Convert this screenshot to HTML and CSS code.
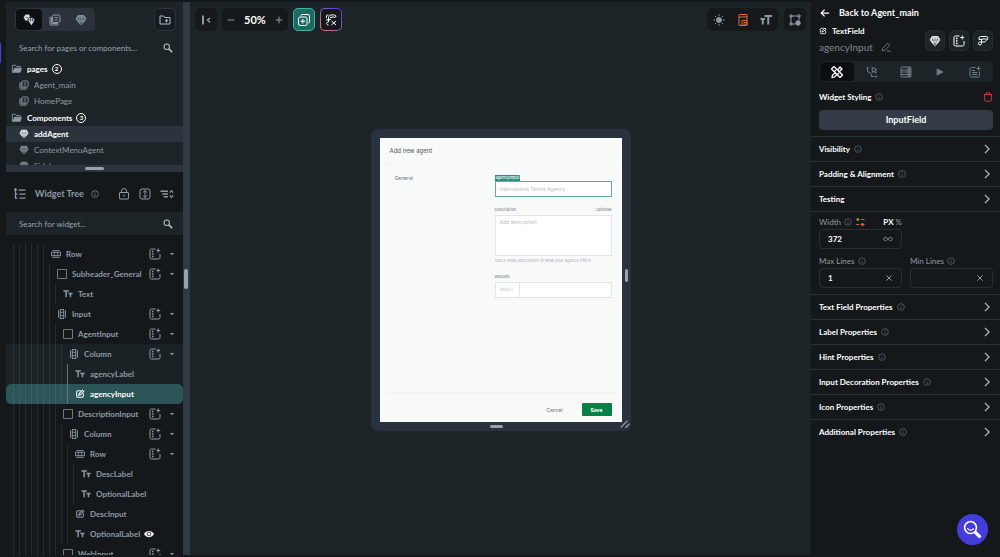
FILE: index.html
```html
<!DOCTYPE html>
<html lang="en">
<head>
    <meta charset="UTF-8">
    <meta name="viewport" content="width=device-width, initial-scale=1.0">
    <title>addAgent</title>
    <link rel="stylesheet" href="styles.css">
</head>
<body>
    <!-- Icon set -->
    <svg class="sprite" aria-hidden="true">
        <symbol id="i-gem" viewBox="0 0 24 24"><path d="M6 2h12l5 8-11 13L1 10z" fill="currentColor" stroke="none"/><path d="M2 10h20M8 3l-1 7 5 11 5-11-1-7M12 3v18" stroke="var(--cut)" stroke-width="1"/></symbol>
        <symbol id="i-pages" viewBox="0 0 24 24"><rect x="7" y="2" width="15" height="15" rx="3"/><path d="M4 6H3a1 1 0 0 0-1 1v13a2 2 0 0 0 2 2h13a2 2 0 0 0 2-2M11 7h7M11 12h7M7 7H5v12h12v-2"/></symbol>
        <symbol id="i-mix" viewBox="0 0 24 24"><path d="M5 1h7l2 4-3 9-6-1-4-6z" fill="currentColor" stroke="none"/><path d="M5 7h6" stroke="var(--cut)" stroke-width="1"/><path d="M9 12l4-5h7l4 5-7 12z" fill="currentColor" stroke="var(--cut)" stroke-width="1.5"/><path d="M10 12h12M15 8v7M19 8v7" stroke="var(--cut)" stroke-width="1"/></symbol>
        <symbol id="i-folder-add" viewBox="0 0 24 24"><path d="M2 4h7l2 3h11v13H2zM15 10v7M12 13.500h6"/></symbol>
        <symbol id="i-folder" viewBox="0 0 24 24"><path d="M1 21V3h8l2 3h9v4H6L2 21" stroke-width="2"/><path d="M6 10h18l-4 11H2z" fill="currentColor" stroke="none"/></symbol>
        <symbol id="i-search" viewBox="0 0 24 24"><circle cx="9" cy="9" r="6.500" stroke-width="2.500"/><path d="M14 14l8 8" stroke-width="4"/></symbol>
        <symbol id="i-info" viewBox="0 0 24 24"><circle cx="12" cy="12" r="10"/><path d="M12 11v7M12 6v2"/></symbol>
        <symbol id="i-tree" viewBox="0 0 24 24"><path d="M9 4h14M11 12h12M11 20h12M3 2v18h4M3 12h4" stroke-width="2.500"/><circle cx="3" cy="3" r="2" fill="currentColor"/></symbol>
        <symbol id="i-lock" viewBox="0 0 24 24"><rect x="3" y="9" width="18" height="13" rx="1"/><path d="M7 9V6a5 5 0 0 1 10 0v3M12 13v4"/></symbol>
        <symbol id="i-expand" viewBox="0 0 24 24"><rect x="2" y="2" width="20" height="20" rx="4"/><path d="M12 5v14M8 9l4-4 4 4M8 15l4 4 4-4"/></symbol>
        <symbol id="i-sort" viewBox="0 0 30 24"><path d="M1 6h16M5 12h12M8 18h9" stroke-width="3"/><path d="M21 9l3.500-4L28 9M21 15l3.500 4 3.500-4" stroke-width="2.500"/></symbol>
        <symbol id="i-row" viewBox="0 0 24 24"><path d="M3 4h18M3 20h18" stroke-width="2.500"/><rect x="1" y="8" width="22" height="8"/><path d="M8 8v8M16 8v8"/></symbol>
        <symbol id="i-column" viewBox="0 0 24 24"><path d="M4 3v18M20 3v18" stroke-width="2.500"/><rect x="8" y="1" width="8" height="22"/><path d="M8 8h8M8 16h8"/></symbol>
        <symbol id="i-box" viewBox="0 0 24 24"><rect x="1" y="1" width="22" height="22" rx="1"/></symbol>
        <symbol id="i-type" viewBox="0 0 24 24"><path d="M1 5h13M7.500 5v15M13 11h10M18 11v9" stroke-width="3.500"/></symbol>
        <symbol id="i-field" viewBox="0 0 24 24"><path d="M14 4H7a3 3 0 0 0-3 3v10a3 3 0 0 0 3 3h10a3 3 0 0 0 3-3v-6M9 15l1-4 8-8 3 3-8 8z" stroke-width="2.500"/></symbol>
        <symbol id="i-insert" viewBox="0 0 24 24"><path d="M13 2H5a3 3 0 0 0-3 3v14a3 3 0 0 0 3 3h14a3 3 0 0 0 3-3v-7M18.500 1v8M14.500 5h8"/><path d="M6 7h3M6 12h3M6 17h3" stroke-width="3"/></symbol>
        <symbol id="i-caret" viewBox="0 0 24 24"><path d="M4 8h16l-8 9z" fill="currentColor" stroke="none"/></symbol>
        <symbol id="i-eye" viewBox="0 0 24 24"><path d="M0 12C5 2 19 2 24 12 19 22 5 22 0 12z" fill="currentColor" stroke="none"/><circle cx="12" cy="12" r="4.500" stroke="var(--cut)"/></symbol>
        <symbol id="i-collapse" viewBox="0 0 24 24"><path d="M6 3v18" stroke-width="4"/><path d="M20 8l-5 4 5 5" stroke-width="3"/></symbol>
        <symbol id="i-minus" viewBox="0 0 24 24"><path d="M2 12h20" stroke-width="3"/></symbol>
        <symbol id="i-plus" viewBox="0 0 24 24"><path d="M2 12h20M12 2v20" stroke-width="3"/></symbol>
        <symbol id="i-copy-add" viewBox="0 0 24 24"><rect x="1" y="6" width="17" height="17" rx="3"/><path d="M6 3a2 2 0 0 1 2-2h12a3 3 0 0 1 3 3v12a2 2 0 0 1-2 2M9.500 10v9M5 14.500h9"/></symbol>
        <symbol id="i-flow" viewBox="0 0 24 24"><path d="M7 22c-5 0-5-6 0-6V7c0-7 14-6 15-3 0 3-3 3-5 2l-7 1M2 12l10-1M13 14l9 8M22 14l-9 8M3 8V4c0-2 2-2 4-2"/></symbol>
        <symbol id="i-flow-edit" viewBox="0 0 24 24"><path d="M4 9V6c0-2 1-3 3-3h12c4 0 4 5 0 5H9v9a3 3 0 1 1-4-3h9c5 0 4-5 8-6M4 9h4"/></symbol>
        <symbol id="i-sun" viewBox="0 0 24 24"><circle cx="12" cy="12" r="5" fill="currentColor"/><path d="M12 1v3M12 20v3M1 12h3M20 12h3M4 4l2 2M18 18l2 2M4 20l2-2M18 6l2-2"/></symbol>
        <symbol id="i-device" viewBox="0 0 20 24"><rect x="2" y="1" width="16" height="22" rx="1"/><path d="M2 6h16M8 22v-9h10M12 22v-5h6v5z"/></symbol>
        <symbol id="i-text-size" viewBox="0 0 24 24"><path d="M9 4h15M16.500 4v17M1 10h9M5.500 10v11" stroke-width="4"/></symbol>
        <symbol id="i-nodes" viewBox="0 0 24 24"><path d="M4 4h16M4 4v16M20 4v9M4 20h9"/><circle cx="4" cy="4" r="2.500"/><circle cx="20" cy="4" r="2.500"/><circle cx="4" cy="20" r="2.500"/><circle cx="18" cy="18" r="4.500" fill="currentColor"/></symbol>
        <symbol id="i-back" viewBox="0 0 24 24"><path d="M22 12H3M11 4l-8 8 8 8" stroke-width="3"/></symbol>
        <symbol id="i-edit" viewBox="0 0 24 24"><path d="M3 21l1-6L16 3l5 5L9 20zM14 22h9"/></symbol>
        <symbol id="i-tools" viewBox="0 0 24 24"><path d="M1 6l5-5 17 17-5 5zM7 11l3-3M13 17l3-3M14 7l4-5 4 4-5 5M9 13l-6 5-1 5 5-1 5-5" stroke-width="2.500"/></symbol>
        <symbol id="i-actions" viewBox="0 0 24 24"><path d="M3 5v5c0 4 8 2 8 7v4h5M12 3l10 4-4 2 3 4-3 1-2-4-3 3z"/><circle cx="3" cy="4" r="1.500"/><circle cx="20" cy="21" r="1.500"/></symbol>
        <symbol id="i-data" viewBox="0 0 24 24"><rect x="2" y="2" width="20" height="20" rx="1"/><path d="M2 8h20M2 12h20M2 17h20M16 2v20M19 2v20"/></symbol>
        <symbol id="i-play" viewBox="0 0 24 24"><path d="M4 3l17 9-17 9z" fill="currentColor" stroke="none"/></symbol>
        <symbol id="i-note" viewBox="0 0 24 24"><path d="M13 3H5a3 3 0 0 0-3 3v13a3 3 0 0 0 3 3h13a3 3 0 0 0 3-3v-8M6 9h6M6 13h11M6 17h11M19 1v8M15 5h8"/></symbol>
        <symbol id="i-trash" viewBox="0 0 24 24"><path d="M2 6h20M8 6V2h8v4M4 6v14a2 2 0 0 0 2 2h12a2 2 0 0 0 2-2V6"/></symbol>
        <symbol id="i-chevron" viewBox="0 0 24 24"><path d="M7 2l10 10L7 22" stroke-width="3"/></symbol>
        <symbol id="i-variable" viewBox="0 0 24 24"><path d="M2 6h7M14 6h9M2 18h9M15 18h8" stroke-width="2"/><circle cx="7" cy="6" r="2.500" fill="currentColor"/><circle cx="18" cy="18" r="2.500" fill="currentColor"/></symbol>
        <symbol id="i-infinity" viewBox="0 0 24 24"><path d="M12 12c-3-5-10-6-10 0s7 5 10 0c3-5 10-6 10 0s-7 5-10 0z"/></symbol>
        <symbol id="i-close" viewBox="0 0 24 24"><path d="M4 4l16 16M20 4L4 20" stroke-width="3"/></symbol>
        <symbol id="i-help" viewBox="0 0 24 24"><circle cx="9.500" cy="9.500" r="7.500"/><path d="M5.500 10.500c2 3 6 3 8 0" stroke-width="1.500"/><path d="M15 15l7 7" stroke-width="4"/></symbol>
        <symbol id="i-grip" viewBox="0 0 24 24"><path d="M2 20L18 4M13 21L23 11" stroke-width="3"/></symbol>
    </svg>

    <div class="app">
        <div class="rail"><span class="rail-mark"></span></div>

        <!-- Left panel -->
        <aside class="sidebar">
            <div class="side-head">
                <div class="toggle-group">
                    <button class="active" aria-label="All"><svg class="icon"><use href="#i-mix"/></svg></button>
                    <button aria-label="Pages"><svg class="icon"><use href="#i-pages"/></svg></button>
                    <button aria-label="Components"><svg class="icon"><use href="#i-gem"/></svg></button>
                </div>
                <button class="square-btn" aria-label="New folder"><svg class="icon"><use href="#i-folder-add"/></svg></button>
            </div>
            <div class="search">
                <input type="text" aria-label="Search pages" placeholder="Search for pages or components...">
                <svg class="icon"><use href="#i-search"/></svg>
            </div>
            <ul class="pages">
                <li class="group"><svg class="icon"><use href="#i-folder"/></svg>pages<span class="count">2</span></li>
                <li><svg class="icon"><use href="#i-pages"/></svg>Agent_main</li>
                <li><svg class="icon"><use href="#i-pages"/></svg>HomePage</li>
                <li class="group"><svg class="icon"><use href="#i-folder"/></svg>Components<span class="count">3</span></li>
                <li class="active"><svg class="icon"><use href="#i-gem"/></svg>addAgent</li>
                <li><svg class="icon"><use href="#i-gem"/></svg>ContextMenuAgent</li>
                <li><svg class="icon"><use href="#i-gem"/></svg>Sidebar</li>
            </ul>
            <div class="split-h"><span></span></div>
            <div class="tree-head">
                <svg class="icon icon-lg"><use href="#i-tree"/></svg>
                <h2>Widget Tree</h2>
                <svg class="icon icon-sm"><use href="#i-info"/></svg>
                <div class="tree-tools">
                    <button aria-label="Lock"><svg class="icon icon-lg"><use href="#i-lock"/></svg></button>
                    <button aria-label="Expand"><svg class="icon icon-lg"><use href="#i-expand"/></svg></button>
                    <button aria-label="Sort"><svg class="icon icon-wide"><use href="#i-sort"/></svg></button>
                </div>
            </div>
            <div class="search search-tree">
                <input type="text" aria-label="Search widgets" placeholder="Search for widget...">
                <svg class="icon"><use href="#i-search"/></svg>
            </div>
            <ul class="tree">
                <li class="d6"><i></i><svg class="icon"><use href="#i-row"/></svg><span>Row</span><button class="insert" aria-label="Insert"><svg class="icon"><use href="#i-insert"/></svg></button><button aria-label="Toggle"><svg class="caret"><use href="#i-caret"/></svg></button></li>
                <li class="d7"><i></i><svg class="icon"><use href="#i-box"/></svg><span>Subheader_General</span><button class="insert" aria-label="Insert"><svg class="icon"><use href="#i-insert"/></svg></button><button aria-label="Toggle"><svg class="caret"><use href="#i-caret"/></svg></button></li>
                <li class="d8"><i></i><svg class="icon"><use href="#i-type"/></svg><span>Text</span></li>
                <li class="d7"><i></i><svg class="icon"><use href="#i-column"/></svg><span>Input</span><button class="insert" aria-label="Insert"><svg class="icon"><use href="#i-insert"/></svg></button><button aria-label="Toggle"><svg class="caret"><use href="#i-caret"/></svg></button></li>
                <li class="d8"><i></i><svg class="icon"><use href="#i-box"/></svg><span>AgentInput</span><button class="insert" aria-label="Insert"><svg class="icon"><use href="#i-insert"/></svg></button><button aria-label="Toggle"><svg class="caret"><use href="#i-caret"/></svg></button></li>
                <li class="d9 parent"><i></i><svg class="icon"><use href="#i-column"/></svg><span>Column</span><button class="insert" aria-label="Insert"><svg class="icon"><use href="#i-insert"/></svg></button><button aria-label="Toggle"><svg class="caret"><use href="#i-caret"/></svg></button></li>
                <li class="d10 parent near"><i></i><svg class="icon"><use href="#i-type"/></svg><span>agencyLabel</span></li>
                <li class="d10 selected near"><i></i><svg class="icon"><use href="#i-field"/></svg><span>agencyInput</span></li>
                <li class="d8"><i></i><svg class="icon"><use href="#i-box"/></svg><span>DescriptionInput</span><button class="insert" aria-label="Insert"><svg class="icon"><use href="#i-insert"/></svg></button><button aria-label="Toggle"><svg class="caret"><use href="#i-caret"/></svg></button></li>
                <li class="d9"><i></i><svg class="icon"><use href="#i-column"/></svg><span>Column</span><button class="insert" aria-label="Insert"><svg class="icon"><use href="#i-insert"/></svg></button><button aria-label="Toggle"><svg class="caret"><use href="#i-caret"/></svg></button></li>
                <li class="d10"><i></i><svg class="icon"><use href="#i-row"/></svg><span>Row</span><button class="insert" aria-label="Insert"><svg class="icon"><use href="#i-insert"/></svg></button><button aria-label="Toggle"><svg class="caret"><use href="#i-caret"/></svg></button></li>
                <li class="d11"><i></i><svg class="icon"><use href="#i-type"/></svg><span>DescLabel</span></li>
                <li class="d11"><i></i><svg class="icon"><use href="#i-type"/></svg><span>OptionalLabel</span></li>
                <li class="d10"><i></i><svg class="icon"><use href="#i-field"/></svg><span>DescInput</span></li>
                <li class="d10"><i></i><svg class="icon"><use href="#i-type"/></svg><span>OptionalLabel</span><svg class="icon eye"><use href="#i-eye"/></svg></li>
                <li class="d8"><i></i><svg class="icon"><use href="#i-box"/></svg><span>WebInput</span><button class="insert" aria-label="Insert"><svg class="icon"><use href="#i-insert"/></svg></button><button aria-label="Toggle"><svg class="caret"><use href="#i-caret"/></svg></button></li>
            </ul>
        </aside>
        <div class="split-v"><span></span></div>

        <!-- Canvas -->
        <main class="canvas">
            <div class="toolbar">
                <button class="tool" aria-label="Collapse"><svg class="icon"><use href="#i-collapse"/></svg></button>
                <div class="tool-group zoom">
                    <button aria-label="Zoom out"><svg class="icon"><use href="#i-minus"/></svg></button>
                    <span>50%</span>
                    <button aria-label="Zoom in"><svg class="icon"><use href="#i-plus"/></svg></button>
                </div>
                <button class="tool tool-add" aria-label="Add"><svg class="icon"><use href="#i-copy-add"/></svg></button>
                <button class="tool tool-flow" aria-label="Generate"><svg class="icon"><use href="#i-flow"/></svg></button>
                <div class="tool-group view">
                    <button aria-label="Theme"><svg class="icon"><use href="#i-sun"/></svg></button>
                    <button class="orange" aria-label="Device"><svg class="icon"><use href="#i-device"/></svg></button>
                    <button aria-label="Text size"><svg class="icon"><use href="#i-text-size"/></svg></button>
                </div>
                <button class="tool" aria-label="Layout"><svg class="icon"><use href="#i-nodes"/></svg></button>
            </div>

            <div class="device">
                <div class="screen">
                    <h1>Add new agent</h1>
                    <div class="screen-body">
                        <h2>General</h2>
                        <div class="fields">
                            <span class="tag">agencyInput</span>
                            <input class="box picked" type="text" aria-label="Agency" placeholder="International Tennis Agency">
                            <div class="label-row"><label for="desc">Description</label><span>Optional</span></div>
                            <textarea class="box" id="desc" placeholder="Add description"></textarea>
                            <p>Add a small description of what your agency offers</p>
                            <div class="label-row"><label for="site">Website</label></div>
                            <div class="site"><span>https://</span><input id="site" type="text"></div>
                        </div>
                    </div>
                    <div class="screen-foot">
                        <button class="cancel">Cancel</button>
                        <button class="save">Save</button>
                    </div>
                </div>
                <span class="pull pull-right"></span>
                <span class="pull pull-bottom"></span>
                <svg class="grip"><use href="#i-grip"/></svg>
            </div>
        </main>

        <!-- Properties -->
        <aside class="props">
            <a class="back" href="#"><svg class="icon"><use href="#i-back"/></svg>Back to Agent_main</a>
            <div class="widget">
                <div class="widget-name">
                    <h2><svg class="icon icon-sm"><use href="#i-field"/></svg>TextField</h2>
                    <div class="alias">agencyInput<svg class="icon"><use href="#i-edit"/></svg></div>
                </div>
                <button aria-label="Component"><svg class="icon"><use href="#i-gem"/></svg></button>
                <button aria-label="Insert"><svg class="icon"><use href="#i-insert"/></svg></button>
                <button aria-label="Flow"><svg class="icon"><use href="#i-flow-edit"/></svg></button>
            </div>
            <div class="tabs">
                <button class="active" aria-label="Properties"><svg class="icon icon-lg"><use href="#i-tools"/></svg></button>
                <button aria-label="Actions"><svg class="icon icon-lg"><use href="#i-actions"/></svg></button>
                <button aria-label="Data"><svg class="icon icon-lg"><use href="#i-data"/></svg></button>
                <button aria-label="Animations"><svg class="icon"><use href="#i-play"/></svg></button>
                <button aria-label="Docs"><svg class="icon icon-lg"><use href="#i-note"/></svg></button>
            </div>
            <div class="styling">
                <h3>Widget Styling</h3><svg class="icon icon-sm info"><use href="#i-info"/></svg>
                <button aria-label="Remove"><svg class="icon"><use href="#i-trash"/></svg></button>
            </div>
            <button class="style-btn">InputField</button>

            <button class="section">Visibility<svg class="icon icon-sm info"><use href="#i-info"/></svg><svg class="icon go"><use href="#i-chevron"/></svg></button>
            <button class="section">Padding &amp; Alignment<svg class="icon icon-sm info"><use href="#i-info"/></svg><svg class="icon go"><use href="#i-chevron"/></svg></button>
            <button class="section">Testing<svg class="icon go"><use href="#i-chevron"/></svg></button>
            <div class="form">
                <div class="field">
                    <div class="field-label"><label for="width">Width</label><svg class="icon icon-sm info"><use href="#i-info"/></svg><svg class="icon orange"><use href="#i-variable"/></svg><span class="unit"><b>PX</b> %</span></div>
                    <div class="value"><input id="width" type="text" value="372"><svg class="icon"><use href="#i-infinity"/></svg></div>
                </div>
                <div class="field first">
                    <div class="field-label"><label for="max">Max Lines</label><svg class="icon icon-sm info"><use href="#i-info"/></svg></div>
                    <div class="value"><input id="max" type="text" value="1"><svg class="icon icon-sm"><use href="#i-close"/></svg></div>
                </div>
                <div class="field">
                    <div class="field-label"><label for="min">Min Lines</label><svg class="icon icon-sm info"><use href="#i-info"/></svg></div>
                    <div class="value"><input id="min" type="text"><svg class="icon icon-sm"><use href="#i-close"/></svg></div>
                </div>
            </div>
            <button class="section">Text Field Properties<svg class="icon icon-sm info"><use href="#i-info"/></svg><svg class="icon go"><use href="#i-chevron"/></svg></button>
            <button class="section">Label Properties<svg class="icon icon-sm info"><use href="#i-info"/></svg><svg class="icon go"><use href="#i-chevron"/></svg></button>
            <button class="section">Hint Properties<svg class="icon icon-sm info"><use href="#i-info"/></svg><svg class="icon go"><use href="#i-chevron"/></svg></button>
            <button class="section">Input Decoration Properties<svg class="icon icon-sm info"><use href="#i-info"/></svg><svg class="icon go"><use href="#i-chevron"/></svg></button>
            <button class="section">Icon Properties<svg class="icon icon-sm info"><use href="#i-info"/></svg><svg class="icon go"><use href="#i-chevron"/></svg></button>
            <button class="section">Additional Properties<svg class="icon icon-sm info"><use href="#i-info"/></svg><svg class="icon go"><use href="#i-chevron"/></svg></button>
        </aside>
    </div>
    <button class="help" aria-label="Help"><svg class="icon"><use href="#i-help"/></svg></button>
</body>
</html>
```
FILE: styles.css
```css
:root {
    --dark: #14181b;
    --panel: #1d2428;
    --line: #2b333c;
    --bar: #313945;
    --muted: #8e99a5;
    --cut: #1d2428;
}
* {
    box-sizing: border-box;
}
body {
    margin: 0;
    font-family: Lato, "Liberation Sans", sans-serif;
    font-size: 8px;
    line-height: 10px;
    background-color: var(--dark);
    color: var(--muted);
}
button {
    display: flex;
    align-items: center;
    justify-content: center;
    padding: 0;
    border: none;
    background: none;
    color: inherit;
    font: inherit;
    cursor: pointer;
}
input, textarea {
    min-width: 0;
    padding: 0;
    border: none;
    outline: none;
    background: none;
    color: inherit;
    font: inherit;
}
h1, h2, h3, p, ul {
    margin: 0;
    padding: 0;
    font-size: inherit;
}
ul {
    list-style: none;
}
.sprite {
    display: none;
}
.icon {
    flex: none;
    width: 10px;
    height: 10px;
    fill: none;
    stroke: currentColor;
    stroke-width: 2;
}
.icon-sm {
    width: 8px;
    height: 8px;
}
.icon-lg {
    width: 12px;
    height: 12px;
}
.icon-wide {
    width: 14px;
    height: 12px;
}
.orange {
    color: #e0703c;
}
.app {
    display: flex;
    height: 100vh;
    padding: 2px 0;
}
.rail {
    width: 6px;
    padding-top: 41px;
}
.rail-mark {
    display: block;
    width: 1px;
    height: 20px;
    background-color: #4b3fe0;
}

/* Left panel */
.sidebar {
    display: flex;
    flex-direction: column;
    width: 177px;
    background-color: var(--panel);
}
.side-head {
    display: flex;
    justify-content: space-between;
    padding: 6px 7px 5px 9px;
}
.toggle-group {
    display: flex;
    padding: 1px;
    border-radius: 5px;
    background-color: #2b323c;
    --cut: #2b323c;
}
.toggle-group button {
    width: 26px;
    height: 21px;
    border-radius: 4px;
}
.toggle-group .icon {
    width: 12px;
    height: 12px;
}
.toggle-group .active {
    background-color: #0c0f11;
    color: #d5dae0;
    --cut: #0c0f11;
}
.square-btn {
    width: 22px;
    height: 23px;
    border: 1px solid var(--line);
    border-radius: 5px;
    background-color: #171c20;
}
.square-btn .icon {
    width: 12px;
    height: 12px;
    color: #b2bbc4;
}
.search {
    display: flex;
    align-items: center;
    height: 23px;
    padding: 0 10px 0 13px;
}
.search input {
    flex: 1;
}
.search input::placeholder {
    color: #98a3ae;
}
.search .icon {
    color: #b2bbc4;
}
.pages {
    flex: none;
    height: 106px;
    padding-top: 1px;
    overflow: hidden;
}
.pages li {
    display: flex;
    align-items: center;
    gap: 5px;
    height: 16px;
    padding-left: 13px;
}
.pages .group {
    height: 17px;
    padding-left: 5px;
    gap: 4px;
    color: #ffffff;
    font-weight: 700;
}
.pages .group .icon {
    width: 12px;
    color: var(--muted);
}
.pages .active {
    background-color: #2b343d;
    color: #ffffff;
    font-weight: 700;
    --cut: #2b343d;
}
.count {
    width: 10px;
    height: 10px;
    border: 1px solid #ffffff;
    border-radius: 50%;
    font-size: 6px;
    line-height: 8px;
    text-align: center;
}
.split-h {
    display: flex;
    flex: none;
    align-items: center;
    justify-content: center;
    height: 7px;
    background-color: #2c353f;
}
.split-h span {
    width: 19px;
    height: 3px;
    border-radius: 2px;
    background-color: #98a3ae;
}
.tree-head {
    display: flex;
    flex: none;
    align-items: center;
    height: 40px;
    padding: 4px 9px 0 8px;
    background-color: var(--dark);
}
.tree-head h2 {
    margin: 0 7px 0 9px;
    font-size: 9px;
    font-weight: 700;
}
.tree-tools {
    display: flex;
    gap: 9px;
    margin-left: auto;
}
.search-tree {
    flex: none;
}
.tree {
    flex: 1;
    min-height: 0;
    padding-top: 9px;
    overflow: hidden;
    background-color: var(--dark);
    --cut: #14181b;
}
.tree li {
    display: flex;
    align-items: center;
    height: 20px;
    padding: 0 8px 0 7px;
    font-weight: 700;
}
.tree i {
    flex: none;
    align-self: stretch;
    margin-right: 2px;
    background-image: repeating-linear-gradient(to right, rgba(142, 153, 165, 0.15) 0 1px, transparent 1px 6px);
}
.d6 i { width: 36px; }
.d7 i { width: 42px; }
.d8 i { width: 48px; }
.d9 i { width: 54px; }
.d10 i { width: 60px; }
.d11 i { width: 66px; }
.tree span {
    margin-left: 5px;
}
.tree .insert {
    margin: 0 8px 0 auto;
}
.insert .icon {
    width: 12px;
    height: 12px;
}
.caret {
    width: 6px;
    height: 6px;
}
.tree .eye {
    margin-left: 4px;
    color: #ffffff;
}
.tree .parent {
    background-color: #1b2225;
}
.tree .near i {
    background-image:
        linear-gradient(to left, transparent 5px, #66737c 5px 6px, transparent 6px),
        repeating-linear-gradient(to right, rgba(142, 153, 165, 0.15) 0 1px, transparent 1px 6px);
}
.tree .selected {
    border-radius: 5px;
    background-color: #2b5556;
    color: #ffffff;
}
.split-v {
    display: flex;
    align-items: center;
    width: 7px;
    padding-left: 1px;
    background-color: var(--bar);
}
.split-v span {
    width: 4px;
    height: 20px;
    border-radius: 2px;
    background-color: #98a3ae;
}

/* Canvas */
.canvas {
    flex: 1;
    min-width: 0;
    background-color: var(--panel);
}
.toolbar {
    display: flex;
    gap: 5px;
    padding: 6px 5px;
}
.tool, .tool-group {
    height: 23px;
    border-radius: 5px;
    background-color: #15191c;
}
.tool {
    width: 22px;
}
.toolbar .icon {
    width: 12px;
    height: 12px;
}
.tool-group {
    display: flex;
    align-items: center;
    justify-content: space-between;
    padding: 0 5px;
}
.zoom {
    width: 66px;
}
.toolbar .zoom .icon {
    width: 8px;
    height: 8px;
}
.zoom span {
    color: #ffffff;
    font-size: 11px;
    font-weight: 700;
}
.tool-add {
    border: 1px solid #3fb3a0;
    background-color: #1d6a62;
    color: #ffffff;
}
.tool-flow {
    border: 1px solid transparent;
    background: linear-gradient(#15191c, #15191c) padding-box, linear-gradient(45deg, #e58068, #8a5cc0, #4b3fe0) border-box;
    color: #ffffff;
}
.view {
    width: 71px;
    margin: 0 1px 0 auto;
    padding: 0 6px;
}
.device {
    position: relative;
    width: 260px;
    margin: 92px auto 0;
    padding: 9px;
    border-radius: 7px;
    background-color: #2a333d;
}
.screen {
    display: flex;
    flex-direction: column;
    height: 284px;
    padding: 0 4px;
    border: 1px solid #ffffff;
    background-color: #f8faf9;
    color: #6d7580;
    font-family: Inter, "Liberation Sans", sans-serif;
    font-size: 4px;
    line-height: 6px;
}
.screen h1 {
    padding: 8px 5px;
    border-bottom: 1px solid #eff1f2;
    color: #4f5660;
    font-size: 6px;
    font-weight: 400;
    line-height: 8px;
}
.screen-body {
    display: flex;
    flex: 1;
    padding: 11px 5px 0 10px;
}
.screen h2 {
    flex: 1;
    font-size: 5px;
    font-weight: 400;
}
.fields {
    display: flex;
    flex-direction: column;
    align-items: stretch;
    width: 117px;
}
.tag {
    align-self: flex-start;
    padding: 0 1px;
    background-color: #238f80;
    color: #ffffff;
    font-weight: 500;
}
.box {
    padding: 3px 4px;
    border: 1px solid #e3e6e9;
    background-color: #ffffff;
    font-size: 5px;
    line-height: 7px;
}
.box::placeholder {
    color: #b9bec5;
}
.box.picked {
    height: 16px;
    border-color: #62ad9f;
}
textarea.box {
    height: 41px;
    resize: none;
}
.label-row {
    display: flex;
    justify-content: space-between;
    margin-top: 10px;
    padding-bottom: 2px;
}
.fields p {
    margin-top: 2px;
    color: #a9aeb5;
}
.site {
    display: flex;
    height: 16px;
    border: 1px solid #e3e6e9;
    background-color: #ffffff;
}
.site span {
    width: 24px;
    padding-left: 4px;
    border-right: 1px solid #e3e6e9;
    color: #b9bec5;
    line-height: 14px;
}
.site input {
    flex: 1;
}
.screen-foot {
    display: flex;
    justify-content: flex-end;
    gap: 12px;
    padding: 9px 5px 5px;
    border-top: 1px solid #f2f4f4;
    font-size: 5px;
}
.screen-foot button {
    width: 30px;
    height: 13px;
    border-radius: 1px;
}
.save {
    background-color: #078048;
    color: #ffffff;
    font-weight: 700;
}
.pull {
    position: absolute;
    border-radius: 2px;
    background-color: #98a3ae;
}
.pull-right {
    top: 140px;
    right: 3px;
    width: 3px;
    height: 13px;
}
.pull-bottom {
    bottom: 3px;
    left: 119px;
    width: 13px;
    height: 3px;
}
.grip {
    position: absolute;
    right: 1px;
    bottom: 2px;
    width: 10px;
    height: 10px;
    stroke: #98a3ae;
}

/* Properties */
.props {
    width: 189px;
    color: #ffffff;
    --cut: #14181b;
}
.back {
    display: flex;
    align-items: center;
    gap: 9px;
    padding: 6px 9px 4px;
    color: #ffffff;
    font-size: 9px;
    font-weight: 700;
    text-decoration: none;
}
.widget {
    display: flex;
    align-items: center;
    gap: 4px;
    padding: 4px 7px 8px 8px;
}
.widget-name {
    flex: 1;
}
.widget h2 {
    display: flex;
    align-items: center;
    gap: 5px;
}
.alias {
    display: flex;
    align-items: center;
    gap: 8px;
    height: 17px;
    padding-top: 4px;
    color: #7c8793;
    font-size: 10px;
}
.widget button {
    width: 20px;
    height: 21px;
    margin-top: 2px;
    border: 1px solid #262e36;
    border-radius: 5px;
    background-color: var(--panel);
}
.widget button .icon {
    width: 12px;
    height: 12px;
}
.tabs {
    display: flex;
    margin: 0 7px 0 8px;
    padding: 1px;
    border-radius: 5px;
    background-color: var(--panel);
    color: #717c88;
}
.tabs button {
    flex: 1;
    height: 19px;
    border-radius: 4px;
}
.tabs .active {
    background-color: #0c0f11;
    color: #ffffff;
}
.styling {
    display: flex;
    align-items: center;
    gap: 4px;
    padding: 10px 7px 8px 8px;
}
.styling button {
    margin-left: auto;
    color: #d8434f;
}
.info {
    color: #66717d;
}
.style-btn {
    width: calc(100% - 15px);
    height: 20px;
    margin: 0 7px 6px 8px;
    border-radius: 4px;
    background-color: #333b46;
    font-size: 9px;
    font-weight: 700;
}
.section {
    justify-content: flex-start;
    gap: 4px;
    width: 100%;
    height: 25px;
    padding: 0 8px;
    border-top: 1px solid #2b333a;
    font-weight: 700;
}
.go {
    margin-left: auto;
    color: #b2bbc4;
}
.form {
    display: grid;
    grid-template-columns: repeat(2, minmax(0, 1fr));
    gap: 5px 8px;
    padding: 3px 7px 6px 8px;
    border-top: 1px solid #2b333a;
    color: var(--muted);
}
.first {
    grid-column: 1;
}
.field-label {
    display: flex;
    align-items: center;
    gap: 3px;
    height: 14px;
}
.unit {
    margin-left: auto;
}
.unit b {
    color: #ffffff;
}
.value {
    display: flex;
    align-items: center;
    height: 20px;
    padding: 0 8px;
    border: 1px solid #272f36;
    border-radius: 4px;
}
.value input {
    flex: 1;
    color: #ffffff;
    font-weight: 700;
}
.help {
    position: fixed;
    right: 12px;
    bottom: 12px;
    width: 31px;
    height: 31px;
    border-radius: 50%;
    background-color: #453cdc;
    color: #ffffff;
}
.help .icon {
    width: 19px;
    height: 19px;
}
```
